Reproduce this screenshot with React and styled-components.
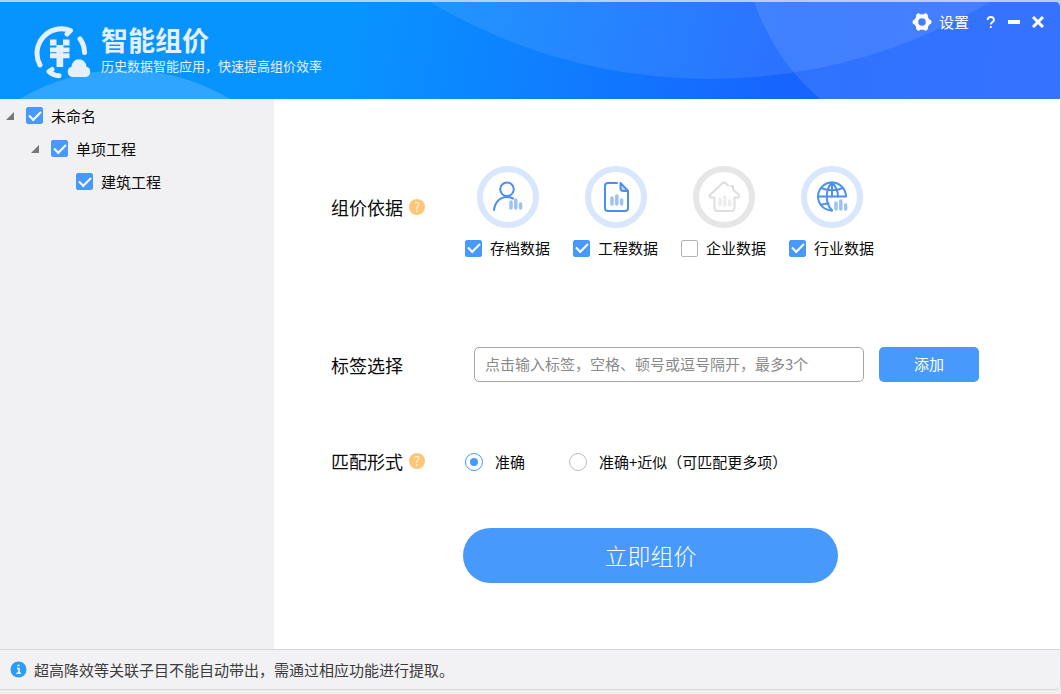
import React, { useState } from 'react';
import styled, { createGlobalStyle } from 'styled-components';

const GlobalStyle = createGlobalStyle`
  *, *::before, *::after {
    box-sizing: border-box;
  }

  body {
    margin: 0;
    background: #f0f0f0;
    color: #0c0c0c;
    font-family: 'Noto Sans CJK SC', 'Noto Sans', sans-serif;
    font-size: 15px;
    line-height: 20px;
  }

  button, input {
    font: inherit;
  }
`;

const treeItems = [
    { id: 'root', name: '未命名', level: 0, open: true },
    { id: 'single', name: '单项工程', level: 1, open: true },
    { id: 'building', name: '建筑工程', level: 2, open: false },
];

const SmallBars = ({ x, y }) => (
    <g stroke="currentColor" strokeWidth="3.5" strokeLinecap="round" opacity="0.55">
        <path d={`M${x} ${y - 6}v6M${x + 4.8} ${y - 8}v8M${x + 9.6} ${y - 4}v4`} />
    </g>
);

const PersonIcon = () => (
    <svg width="32" height="32" viewBox="0 0 32 32" fill="none">
        <g stroke="currentColor" strokeWidth="2" strokeLinecap="round">
            <circle cx="15" cy="8.3" r="6.8" />
            <path d="M2 29c1-8 6-13 13-13 3 0 4 .5 6 1.5" />
        </g>
        <SmallBars x={19} y={27} />
    </svg>
);

const FileIcon = () => (
    <svg width="32" height="32" viewBox="0 0 32 32" fill="none">
        <g stroke="currentColor" strokeWidth="2" strokeLinecap="round" strokeLinejoin="round">
            <path d="M17 2H8a3 3 0 0 0-3 3v22a3 3 0 0 0 3 3h17a3 3 0 0 0 3-3V10" />
            <path d="M20.5 2v5a3 3 0 0 0 3 3H28z" fill="currentColor" fillOpacity="0.3" />
        </g>
        <SmallBars x={12} y={23} />
    </svg>
);

const HouseIcon = () => (
    <svg width="32" height="32" viewBox="0 0 32 32" fill="none">
        <g stroke="currentColor" strokeWidth="2" strokeLinecap="round" strokeLinejoin="round">
            <path d="M20 4.5l-2-2a3 3 0 0 0-4 0L2 14c-1 1 0 2.5 1 2.5h3.500V27a3 3 0 0 0 3 3h14a3 3 0 0 0 3-3V16.5H30c1 0 2-1.5 1-2.5l-6-5.5V5h-2" />
        </g>
        <SmallBars x={12} y={24} />
    </svg>
);

const GlobeIcon = () => (
    <svg width="32" height="32" viewBox="0 0 32 32" fill="none">
        <g stroke="currentColor" strokeWidth="2" strokeLinecap="round" strokeLinejoin="round">
            <path d="M16 29.5A14 14 0 1 1 30 15.500H2" />
            <path d="M16 29.5C9 22 9 9 16 1.5M16 1.5c4 4 6 9 6 14M16 1.5v14M5 7c7 3 15 3 22 0M5 24c3-1.5 5-1.5 7.5-1.5" />
        </g>
        <SmallBars x={20} y={28} />
    </svg>
);

const sources = [
    { id: 'archive', name: '存档数据', Icon: PersonIcon },
    { id: 'project', name: '工程数据', Icon: FileIcon },
    { id: 'company', name: '企业数据', Icon: HouseIcon },
    { id: 'industry', name: '行业数据', Icon: GlobeIcon },
];

const Logo = () => (
    <svg width="58" height="56" viewBox="0 0 58 56" fill="none">
        <g stroke="#e4f0ff" strokeWidth="5" strokeLinecap="round" strokeLinejoin="round">
            <path d="M6 40A24.5 24.5 0 0 1 36.5 5.5L33 9" />
            <path d="M46 14Q50.5 20 50.5 27.5" />
            <path d="M18 44.5L15 46.5Q19 50.5 25 50.8" />
        </g>
        <g fill="#e4f0ff">
            <path d="M16 14.5h6.5V20h6.5v-5.5h6.5v6H29.5v2h6v4.8H16v-4.8h6.5v-2H16z" />
            <path d="M16 28.3h19.5v5H29.2v8.7h-6.7v-8.7H16z" />
            <path d="M22.5 27h6.7v2h-6.7z" />
            <path d="M39 52a5.2 5.2 0 0 1-1.5-10.2 7.5 7.5 0 0 1 15 0A5.2 5.2 0 0 1 51 52z" />
        </g>
    </svg>
);

const GearIcon = () => (
    <svg width="20" height="20" viewBox="0 0 20 20" fill="none" stroke="currentColor">
        <circle cx="10" cy="10" r="5.8" strokeWidth="4" />
        <path
            strokeWidth="5"
            strokeLinecap="round"
            d="M3 10h.1M17 10h-.1M6.5 3.9l.1.1M13.5 3.9l-.1.1M6.5 16.1l.1-.1M13.5 16.1l-.1-.1"
        />
    </svg>
);

const App = () => {
    const [treeChecked, setTreeChecked] = useState({ root: true, single: true, building: true });
    const [checked, setChecked] = useState({ archive: true, project: true, company: false, industry: true });
    const [mode, setMode] = useState('exact');
    const [tag, setTag] = useState('');

    return (
        <>
            <GlobalStyle />
            <Page>
                <Window>
                    <Header>
                        <HeaderArt aria-hidden="true">
                            <circle cx="125" cy="274" r="206" fill="#fff" fillOpacity="0.16" />
                            <circle cx="710" cy="-471" r="548" fill="#fff" fillOpacity="0.09" />
                            <circle cx="960" cy="-69" r="217" fill="#fff" fillOpacity="0.1" />
                        </HeaderArt>
                        <Brand>
                            <Logo />
                            <div>
                                <Title>智能组价</Title>
                                <Subtitle>历史数据智能应用，快速提高组价效率</Subtitle>
                            </div>
                        </Brand>
                        <Controls>
                            <ControlButton>
                                <GearIcon />
                                设置
                            </ControlButton>
                            <ControlButton aria-label="帮助">
                                <svg width="10" height="12" viewBox="0 0 10 12" fill="none" stroke="currentColor" strokeWidth="1.8">
                                    <path d="M1.5 4c0-4 6.5-4 6.5 0 0 2-3.2 2-3.2 4.5M4.800 10v2" />
                                </svg>
                            </ControlButton>
                            <ControlButton aria-label="最小化">
                                <svg width="12" height="12" viewBox="0 0 12 12" stroke="currentColor" strokeWidth="4">
                                    <path d="M0 6h12" />
                                </svg>
                            </ControlButton>
                            <ControlButton aria-label="关闭">
                                <svg width="12" height="12" viewBox="0 0 12 12" stroke="currentColor" strokeWidth="3">
                                    <path d="M1 1l10 10M11 1L1 11" />
                                </svg>
                            </ControlButton>
                        </Controls>
                    </Header>

                    <Body>
                        <Sidebar>
                            {treeItems.map((item) => (
                                <TreeRow key={item.id} $level={item.level}>
                                    <TreeArrow width="10" height="10" viewBox="0 0 10 10">
                                        {item.open && <path d="M9 1v8H1z" fill="#777" />}
                                    </TreeArrow>
                                    <Checkbox
                                        checked={treeChecked[item.id]}
                                        onChange={(e) => setTreeChecked({ ...treeChecked, [item.id]: e.target.checked })}
                                    />
                                    {item.name}
                                </TreeRow>
                            ))}
                        </Sidebar>

                        <Main>
                            <Field>
                                <FieldLabel $height={82}>
                                    组价依据
                                    <HelpButton aria-label="组价依据说明">?</HelpButton>
                                </FieldLabel>
                                <Sources>
                                    {sources.map(({ id, name, Icon }) => (
                                        <Source key={id}>
                                            <Ring $muted={!checked[id]}>
                                                <Icon />
                                            </Ring>
                                            <SourceName>
                                                <Checkbox
                                                    checked={checked[id]}
                                                    onChange={(e) => setChecked({ ...checked, [id]: e.target.checked })}
                                                />
                                                {name}
                                            </SourceName>
                                        </Source>
                                    ))}
                                </Sources>
                            </Field>

                            <Field>
                                <FieldLabel as="label" htmlFor="tag" $height={36}>
                                    标签选择
                                </FieldLabel>
                                <TagEntry>
                                    <TagInput
                                        id="tag"
                                        value={tag}
                                        onChange={(e) => setTag(e.target.value)}
                                        placeholder="点击输入标签，空格、顿号或逗号隔开，最多3个"
                                    />
                                    <AddButton>添加</AddButton>
                                </TagEntry>
                            </Field>

                            <Field>
                                <FieldLabel $height={36}>
                                    匹配形式
                                    <HelpButton aria-label="匹配形式说明">?</HelpButton>
                                </FieldLabel>
                                <Modes>
                                    <ModeOption>
                                        <Radio name="mode" checked={mode === 'exact'} onChange={() => setMode('exact')} />
                                        准确
                                    </ModeOption>
                                    <ModeOption>
                                        <Radio name="mode" checked={mode === 'similar'} onChange={() => setMode('similar')} />
                                        准确+近似（可匹配更多项）
                                    </ModeOption>
                                </Modes>
                            </Field>

                            <SubmitButton>立即组价</SubmitButton>
                        </Main>
                    </Body>

                    <Footer>
                        <svg width="17" height="17" viewBox="0 0 17 17">
                            <circle cx="8.5" cy="8.5" r="8" fill="#2b9df4" />
                            <path d="M7 7.5h2V12M6.5 12.3h4.5M7.5 4.5h2" stroke="#fff" strokeWidth="1.5" fill="none" />
                        </svg>
                        超高降效等关联子目不能自动带出，需通过相应功能进行提取。
                    </Footer>
                </Window>
            </Page>
        </>
    );
};

const Page = styled.div`
  display: flex;
  min-height: 100vh;
  padding: 2px 0 4px;
  background: linear-gradient(#b9cfe6 0 8px, #f0f0f0 8px);
`;

const Window = styled.div`
  display: flex;
  flex: 1;
  flex-direction: column;
  border-right: 1px solid #d8d8dc;
  border-bottom: 1px solid #d8d8dc;
  border-radius: 0 5px 5px 0;
  overflow: hidden;
`;

const Header = styled.header`
  position: relative;
  display: flex;
  justify-content: space-between;
  align-items: flex-start;
  height: 97px;
  background: linear-gradient(100deg, #0894ff 0%, #0894ff 33%, #1764ff 74%, #1f62ff 100%);
  color: #fff;
`;

const HeaderArt = styled.svg`
  position: absolute;
  inset: 0;
  width: 100%;
  height: 100%;
`;

const Brand = styled.div`
  position: relative;
  display: flex;
  gap: 9px;
  padding: 23px 0 0 34px;
`;

const Title = styled.h1`
  margin: 0;
  color: #e4f0ff;
  font-size: 27px;
  font-weight: 700;
  line-height: 30px;
`;

const Subtitle = styled.p`
  margin: 0;
  color: #e4f0ff;
  font-size: 13px;
  line-height: 22px;
`;

const Controls = styled.div`
  position: relative;
  display: flex;
  align-items: center;
  gap: 12px;
  padding: 10px 16px 0 0;
`;

const ControlButton = styled.button`
  display: flex;
  align-items: center;
  gap: 7px;
  height: 20px;
  padding: 0;
  border: 0;
  background: none;
  color: #fff;
  cursor: pointer;

  &:first-child {
    margin-right: 5px;
  }
`;

const Body = styled.div`
  display: flex;
  flex: 1;
`;

const Sidebar = styled.aside`
  flex: 0 0 274px;
  background: #f1f1f3;
`;

const TreeRow = styled.label`
  display: flex;
  align-items: center;
  height: 33px;
  padding-left: ${(props) => 5 + props.$level * 25}px;
`;

const TreeArrow = styled.svg`
  margin-right: 11px;
`;

const Checkbox = styled.input.attrs({ type: 'checkbox' })`
  appearance: none;
  display: grid;
  place-content: center;
  flex: none;
  width: 17px;
  height: 17px;
  margin: 0 8px 0 0;
  border: 1px solid #b4b4b4;
  border-radius: 2px;
  background: #fff;

  &:checked {
    border-color: #4799fb;
    background: #4799fb;
  }

  &:checked::after {
    content: '';
    width: 12px;
    height: 7px;
    margin-bottom: 3px;
    border: solid #fff;
    border-width: 0 0 2px 2px;
    transform: rotate(-45deg);
  }
`;

const Main = styled.main`
  flex: 1;
  padding: 67px 57px 60px;
  background: #fff;
`;

const Field = styled.div`
  display: flex;
  align-items: flex-start;

  & + & {
    margin-top: 89px;
  }

  & + & + & {
    margin-top: 60px;
  }
`;

const FieldLabel = styled.div`
  display: flex;
  align-items: center;
  gap: 6px;
  flex: 0 0 134px;
  height: ${(props) => props.$height}px;
  font-size: 18px;
`;

const HelpButton = styled.button`
  width: 16px;
  height: 16px;
  padding: 0;
  border: 0;
  border-radius: 50%;
  background: #ffc677;
  color: #fff3df;
  font-size: 13px;
  line-height: 16px;
`;

const Sources = styled.div`
  display: flex;
  gap: 23px;
`;

const Source = styled.label`
  display: flex;
  flex-direction: column;
  align-items: center;
  gap: 10px;
`;

const Ring = styled.span`
  display: flex;
  align-items: center;
  justify-content: center;
  width: 62px;
  height: 62px;
  border: 6px solid ${(props) => (props.$muted ? '#e6e6e6' : '#d8e6fe')};
  border-radius: 50%;
  color: ${(props) => (props.$muted ? '#dedede' : '#4c8fee')};
`;

const SourceName = styled.span`
  display: flex;
  align-items: center;
`;

const TagEntry = styled.div`
  display: flex;
  flex: 1;
  gap: 15px;
  padding-left: 9px;
`;

const TagInput = styled.input`
  flex: 1;
  min-width: 0;
  max-width: 390px;
  height: 35px;
  padding: 0 10px 2px;
  border: 1px solid #a6a6a6;
  border-radius: 5px;
  outline: none;

  &::placeholder {
    color: #8a8a8a;
  }
`;

const AddButton = styled.button`
  width: 100px;
  height: 35px;
  padding: 0 0 2px;
  border: 0;
  border-radius: 5px;
  background: #4799fb;
  color: #fff;
`;

const Modes = styled.div`
  display: flex;
  align-items: center;
  gap: 44px;
  height: 38px;
`;

const ModeOption = styled.label`
  display: flex;
  align-items: center;
  gap: 12px;
`;

const Radio = styled.input.attrs({ type: 'radio' })`
  appearance: none;
  display: grid;
  place-content: center;
  width: 18px;
  height: 18px;
  margin: 0;
  border: 1px solid #bcbcbc;
  border-radius: 50%;
  background: #fff;

  &:checked {
    border-color: #4799fb;
  }

  &:checked::after {
    content: '';
    width: 8px;
    height: 8px;
    border-radius: 50%;
    background: #4799fb;
  }
`;

const SubmitButton = styled.button`
  display: block;
  width: 375px;
  height: 55px;
  margin: 47px 0 0 132px;
  padding: 0 0 2px;
  border: 0;
  border-radius: 28px;
  background: #4799fb;
  color: #fff;
  font-size: 23px;
  font-weight: 300;
`;

const Footer = styled.footer`
  display: flex;
  align-items: center;
  gap: 7px;
  height: 40px;
  padding: 0 10px;
  border-top: 1px solid #d8d8dc;
  background: #f2f1f3;
  color: #3c3c3c;
`;

export default App;
